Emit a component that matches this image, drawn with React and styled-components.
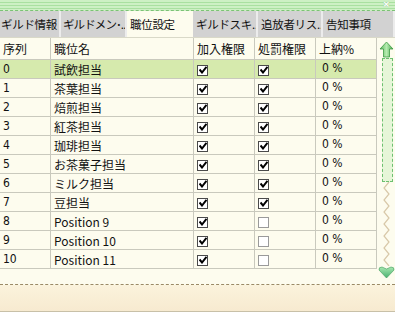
import React from "react";
import styled, { createGlobalStyle } from "styled-components";

const Global = createGlobalStyle`
  html, body { margin: 0; padding: 0; background: #fdfcee; }
  * { box-sizing: border-box; }
`;

const Window = styled.div`
  position: relative;
  width: 395px;
  height: 312px;
  display: flex;
  flex-direction: column;
  background: #fdfcee;
  font-family: "Noto Sans CJK JP", "DejaVu Sans", sans-serif;
  font-size: 12px;
  color: #111;
  overflow: hidden;
`;

const TitleBar = styled.div`
  height: 11px;
  flex: none;
  background: repeating-linear-gradient(
    to bottom,
    #cdf0c4 0px,
    #cdf0c4 2px,
    #a9e0a0 2px,
    #a9e0a0 3px
  );
  border-bottom: 1px dashed #7cc276;
`;

const Close = styled.div`
  position: absolute;
  right: 5px;
  top: 0px;
  color: #ffffff;
  font-family: "DejaVu Sans", sans-serif;
  font-weight: bold;
  font-size: 9px;
  line-height: 9px;
  text-shadow: 0 0 1px #7fae78;
`;

const TabBar = styled.div`
  height: 26px;
  flex: none;
  display: flex;
  background: #d2d2d2;
`;

const Tab = styled.div`
  width: ${(p) => p.w}px;
  flex: none;
  display: flex;
  align-items: center;
  padding-left: ${(p) => p.pl ?? 3}px;
  white-space: nowrap;
  overflow: hidden;
  background: ${(p) => (p.active ? "#fdfcee" : "#d2d2d2")};
  border-right: 2px solid ${(p) => (p.active ? "#fdfcee" : "#ececec")};
  font-size: 11.5px;
  letter-spacing: ${(p) => (p.tight ? "-0.9px" : "-0.3px")};
`;

const Main = styled.div`
  display: flex;
  flex: none;
  height: 248px;
  border-top: 1px solid #d9d9c8;
  border-bottom: 1px dashed #9a8a66;
`;

const Table = styled.div`
  width: 377px;
  flex: none;
  display: flex;
  flex-direction: column;
`;

const Row = styled.div`
  display: grid;
  grid-template-columns: 51px 143px 61px 61px 61px;
  height: ${(p) => (p.header ? 22 : 19)}px;
  background: ${(p) => (p.selected ? "#d6eaad" : "transparent")};
  border-bottom: 1px solid #c9c9bd;
`;

const Cell = styled.div`
  display: flex;
  align-items: center;
  padding-left: ${(p) => p.pl ?? 3}px;
  border-right: 1px solid #c9c9bd;
  white-space: nowrap;
  overflow: hidden;
  font-family: ${(p) =>
    p.num ? '"Liberation Sans Narrow", "DejaVu Sans Condensed", "Noto Sans CJK JP", sans-serif' : 'inherit'};
  font-size: 12px;
  padding-bottom: ${(p) => (p.up ? 3 : 0)}px;
`;

const Box = styled.div`
  width: 11px;
  height: 11px;
  margin-top: 2px;
  border: 1px solid ${(p) => (p.checked ? "#4a4a4a" : "#9a9a9a")};
  background: #fff;
  display: flex;
  align-items: center;
  justify-content: center;
`;

const ScrollCol = styled.div`
  flex: none;
  width: 18px;
  display: flex;
  flex-direction: column;
  align-items: center;
  padding-top: 3px;
`;

const Track = styled.div`
  width: 11px;
  height: 124px;
  margin-left: 3px;
  border: 1px dashed #6cc070;
  background: #e6f6d8;
`;

const Bottom = styled.div`
  flex: 1;
  background: linear-gradient(to bottom, #fbf3dc, #f7ead0);
  border-bottom: 1px solid #c8c0a8;
`;

const Check = () => (
  <svg width="8" height="8" viewBox="0 0 8 8">
    <path d="M0.5 3.5 L3 6.5 L7.5 0.8" stroke="#000" strokeWidth="2" fill="none" />
  </svg>
);

const UpArrow = () => (
  <svg width="15" height="17" viewBox="0 0 15 17">
    <defs>
      <linearGradient id="ga" x1="0" x2="1">
        <stop offset="0" stopColor="#5cb860" />
        <stop offset="0.5" stopColor="#b6ecb0" />
        <stop offset="1" stopColor="#4aa850" />
      </linearGradient>
    </defs>
    <path d="M7.5 1 L14 8 L10.5 8 L10.5 16 L4.5 16 L4.5 8 L1 8 Z" fill="url(#ga)" stroke="#3e9a44" strokeWidth="0.8" />
  </svg>
);

const Zigzag = () => (
  <svg width="14" height="84" viewBox="0 0 14 84">
    <path
      d="M10 0 L5 6 L10 12 L5 18 L10 24 L5 30 L10 36 L5 42 L10 48 L5 54 L10 60 L5 66 L10 72 L5 78 L10 84"
      stroke="#d8c8a8"
      strokeWidth="1.2"
      fill="none"
    />
  </svg>
);

const DownArrow = () => (
  <svg width="17" height="13" viewBox="0 0 17 13">
    <defs>
      <linearGradient id="gd" x1="0" y1="0" x2="0" y2="1">
        <stop offset="0" stopColor="#a8e8b0" />
        <stop offset="1" stopColor="#48b070" />
      </linearGradient>
    </defs>
    <path d="M8.5 12 L1 4 Q0.5 1 4 1 L8.5 3 L13 1 Q16.5 1 16 4 Z" fill="url(#gd)" stroke="#3e9a5a" strokeWidth="0.6" />
  </svg>
);

const tabs = [
  { label: "ギルド情報", w: 61, pl: 1 },
  { label: "ギルドメン･..", w: 66, pl: 2, tight: true },
  { label: "職位設定", w: 66, active: true },
  { label: "ギルドスキ..", w: 65 },
  { label: "追放者リス..", w: 65 },
  { label: "告知事項", w: 72 },
];

const rows = [
  ["0", "試飲担当", true, true],
  ["1", "茶葉担当", true, true],
  ["2", "焙煎担当", true, true],
  ["3", "紅茶担当", true, true],
  ["4", "珈琲担当", true, true],
  ["5", "お茶菓子担当", true, true],
  ["6", "ミルク担当", true, true],
  ["7", "豆担当", true, true],
  ["8", "Position 9", true, false],
  ["9", "Position 10", true, false],
  ["10", "Position 11", true, false],
];

export default function App() {
  return (
    <Window>
      <Global />
      <TitleBar />
      <Close>×</Close>
      <TabBar>
        {tabs.map((t) => (
          <Tab key={t.label} w={t.w} pl={t.pl} tight={t.tight} active={t.active}>
            {t.label}
          </Tab>
        ))}
      </TabBar>
      <Main>
        <Table>
          <Row header>
            <Cell>序列</Cell>
            <Cell>職位名</Cell>
            <Cell>加入権限</Cell>
            <Cell>処罰権限</Cell>
            <Cell>上納%</Cell>
          </Row>
          {rows.map(([n, name, a, b], i) => (
            <Row key={n} selected={i === 0}>
              <Cell num>{n}</Cell>
              <Cell>{name}</Cell>
              <Cell>
                <Box checked={a}>{a && <Check />}</Box>
              </Cell>
              <Cell>
                <Box checked={b}>{b && <Check />}</Box>
              </Cell>
              <Cell pl={6} num up>
                0 %
              </Cell>
            </Row>
          ))}
        </Table>
        <ScrollCol>
          <UpArrow />
          <Track />
          <Zigzag />
          <DownArrow />
        </ScrollCol>
      </Main>
      <Bottom />
    </Window>
  );
}
